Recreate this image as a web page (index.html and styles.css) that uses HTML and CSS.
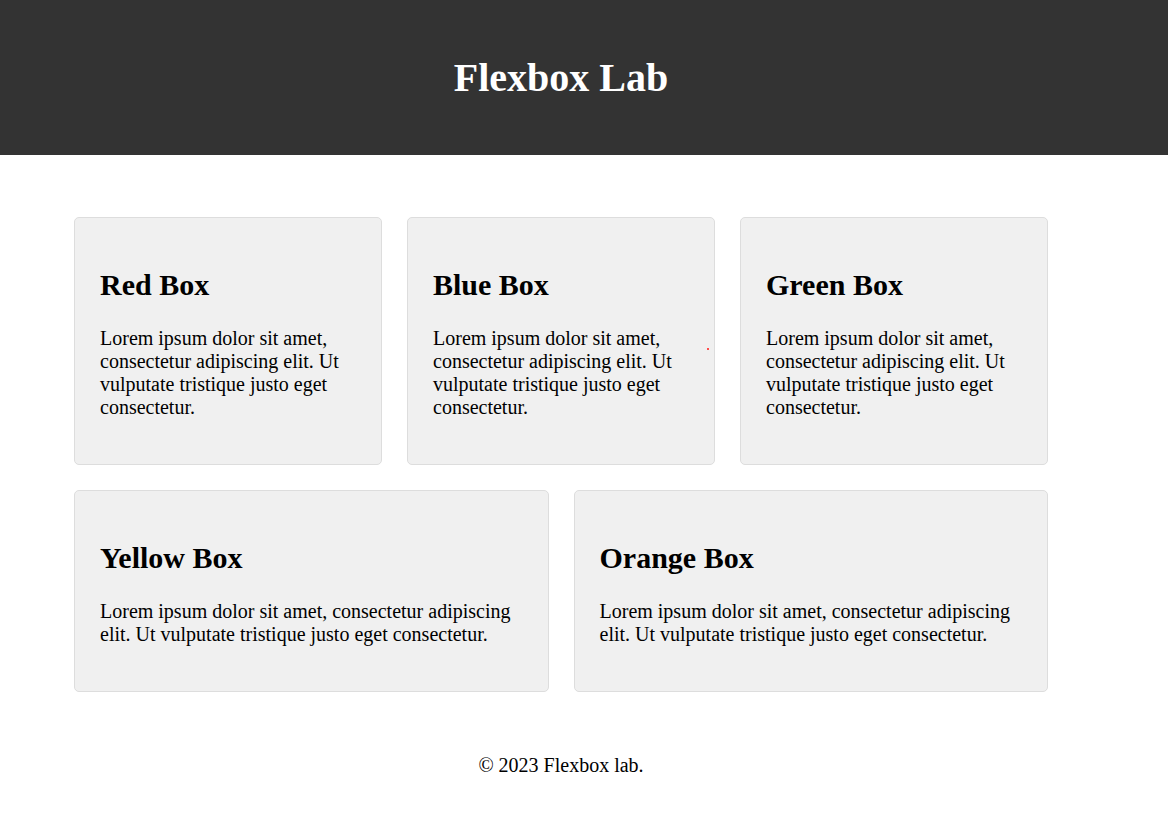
FILE: index.html
```html
<!DOCTYPE html>
<html lang="en">
<head>
<meta charset="utf-8">
<title>Flexbox Lab</title>
<link rel="stylesheet" href="styles.css">
</head>
<body>
<header class="site-header">
  <div class="wrap">
    <h1 class="title">Flexbox Lab</h1>
  </div>
</header>
<main class="wrap">
  <div class="boxes">
    <div class="row">
      <section class="card">
        <h2>Red Box</h2>
        <p>Lorem ipsum dolor sit amet, consectetur adipiscing elit. Ut vulputate tristique justo eget consectetur.</p>
      </section>
      <section class="card card-marked">
        <h2>Blue Box</h2>
        <p>Lorem ipsum dolor sit amet, consectetur adipiscing elit. Ut vulputate tristique justo eget consectetur.</p>
        <span class="dot"></span>
      </section>
      <section class="card">
        <h2>Green Box</h2>
        <p>Lorem ipsum dolor sit amet, consectetur adipiscing elit. Ut vulputate tristique justo eget consectetur.</p>
      </section>
    </div>
    <div class="row">
      <section class="card">
        <h2>Yellow Box</h2>
        <p>Lorem ipsum dolor sit amet, consectetur adipiscing elit. Ut vulputate tristique justo eget consectetur.</p>
      </section>
      <section class="card">
        <h2>Orange Box</h2>
        <p>Lorem ipsum dolor sit amet, consectetur adipiscing elit. Ut vulputate tristique justo eget consectetur.</p>
      </section>
    </div>
  </div>
</main>
<footer class="wrap site-footer">
  <p>&copy; 2023 Flexbox lab.</p>
</footer>
</body>
</html>
```
FILE: styles.css
```css
html, body {
  margin: 0;
  padding: 0;
  background: #fff;
}
body {
  font-family: "Liberation Serif", "Times New Roman", serif;
  font-size: 20px;
  color: #000;
}
.wrap {
  width: 1122px;
  box-sizing: border-box;
}
.site-header {
  background: #333333;
  color: #fff;
  height: 155px;
  display: flex;
  align-items: center;
}
.title {
  margin: 0;
  font-size: 40px;
  font-weight: bold;
  text-align: center;
  line-height: 46px;
}
main.wrap {
  padding: 62px 0;
}
.boxes {
  width: 974px;
  margin: 0 auto;
  display: flex;
  flex-direction: column;
  gap: 25px;
}
.row {
  display: flex;
  gap: 25px;
}
.card {
  flex: 1 1 0;
  background: #f0f0f0;
  border: 1px solid #dddddd;
  border-radius: 5px;
  padding: 25px;
  position: relative;
}
.card h2 {
  font-size: 30px;
  margin: 25px 0;
}
.card p {
  margin: 20px 0;
}
.dot {
  position: absolute;
  right: 5px;
  top: 130px;
  width: 2px;
  height: 2px;
  background: #ff4d4d;
}
.site-footer {
  text-align: center;
}
.site-footer p {
  margin: 0;
  padding-bottom: 30px;
}
```
